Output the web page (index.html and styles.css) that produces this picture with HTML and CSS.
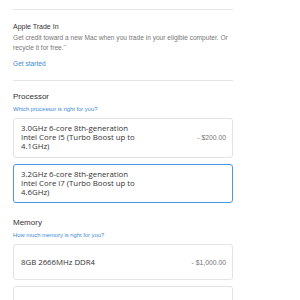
FILE: index.html
```html
<!DOCTYPE html>
<html>
<head>
<meta charset="utf-8">
<link rel="stylesheet" href="styles.css">
</head>
<body>
<div class="page">
  <div class="divider first"></div>
  <section class="trade">
    <div class="trade-title">Apple Trade In</div>
    <p class="trade-desc">Get credit toward a new Mac when you trade in your eligible computer. Or recycle it for free.<span class="sup">**</span></p>
    <a class="link trade-link">Get started</a>
  </section>
  <div class="divider"></div>
  <section class="group">
    <div class="group-title">Processor</div>
    <a class="link small">Which processor is right for you?</a>
    <div class="options">
      <div class="option">
        <div class="option-name">3.0GHz 6-core 8th-generation Intel Core i5 (Turbo Boost up to 4.1GHz)</div>
        <div class="option-price">- $200.00</div>
      </div>
      <div class="option selected">
        <div class="option-name">3.2GHz 6-core 8th-generation Intel Core i7 (Turbo Boost up to 4.6GHz)</div>
        <div class="option-price"></div>
      </div>
    </div>
  </section>
  <section class="group">
    <div class="group-title">Memory</div>
    <a class="link small">How much memory is right for you?</a>
    <div class="options">
      <div class="option single">
        <div class="option-name">8GB 2666MHz DDR4</div>
        <div class="option-price">- $1,000.00</div>
      </div>
      <div class="option single">
        <div class="option-name">16GB 2666MHz DDR4</div>
        <div class="option-price">- $800.00</div>
      </div>
    </div>
  </section>
</div>
</body>
</html>
```
FILE: styles.css
```css
html, body {
  margin: 0;
  padding: 0;
  background: #fff;
}
body {
  font-family: "Liberation Sans", Arial, sans-serif;
  color: #333;
}
.page {
  width: 220px;
  margin-left: 13px;
}
.divider {
  border-top: 1px solid #e5e5e5;
}
.divider.first {
  margin-top: 9px;
}
.trade {
  padding: 12px 0 12px;
}
.trade-title {
  font-size: 7px;
  line-height: 9px;
  color: #333;
}
.trade-desc {
  margin: 2px 0 0;
  font-size: 6.6px;
  line-height: 9.5px;
  color: #777;
}
.trade-desc .sup {
  font-size: 3.5px;
  position: relative;
  top: -2px;
}
.link {
  display: block;
  color: #3a8ad6;
}
.trade-link {
  margin-top: 5px;
  font-size: 6.6px;
  line-height: 9px;
}
.group {
  padding-top: 10px;
  margin-bottom: 4px;
}
.group-title {
  font-size: 8px;
  line-height: 11px;
  color: #333;
}
.link.small {
  margin-top: 3px;
  font-size: 5.8px;
  line-height: 8px;
}
.options {
  margin-top: 5px;
  display: flex;
  flex-direction: column;
  gap: 6px;
}
.option {
  border: 1px solid #e3e3e3;
  border-radius: 3px;
  padding: 5px 6px 5px 7px;
  display: flex;
  align-items: center;
  justify-content: space-between;
  box-sizing: border-box;
}
.option.selected {
  border-color: #4a98e4;
}
.option.single {
  height: 36px;
}
.option-name {
  width: 122px;
  font-family: "Open Sans", "Liberation Sans", sans-serif;
  font-size: 7.8px;
  line-height: 9.2px;
  color: #333;
}
.option-price {
  font-size: 6.8px;
  color: #777;
}
```
